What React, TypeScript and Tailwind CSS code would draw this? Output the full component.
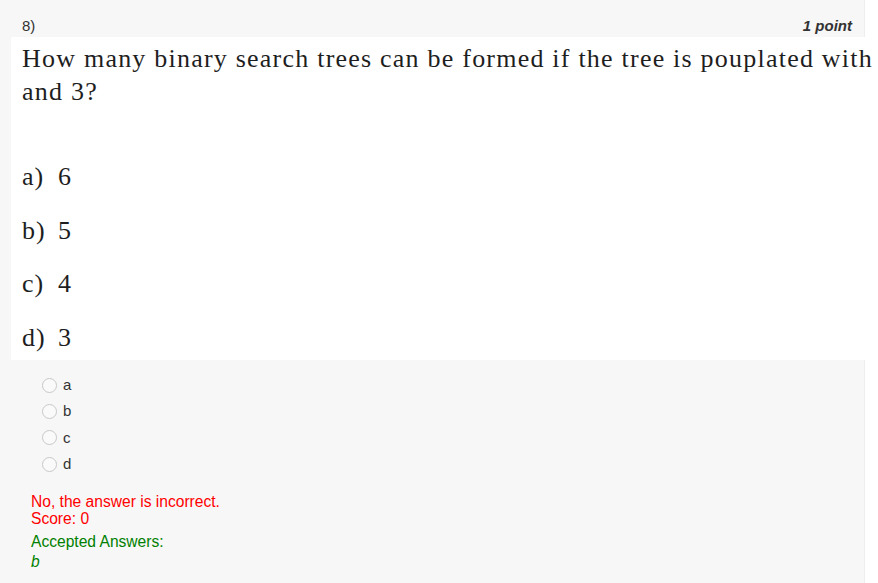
import React from "react";

const options = [
  ["a)", "6"],
  ["b)", "5"],
  ["c)", "4"],
  ["d)", "3"],
];

export default function App() {
  return (
    <div className="w-[878px] h-[583px] overflow-hidden bg-white" style={{ fontFamily: '"Liberation Sans", Arial, sans-serif' }}>
      <div className="w-[865px] h-[583px] bg-[#f7f7f7] border-r border-[#eeeeee]">
        <div className="h-[37px] flex items-center justify-between pl-[22px] pr-[12px] text-[15px] text-[#333333] pt-[16px]">
          <span>8)</span>
          <span className="font-bold italic">1 point</span>
        </div>
        <div className="ml-[11px] w-[900px] h-[323px] bg-white overflow-hidden pl-[11px] pt-[5px] text-[#1e1e1e]" style={{ fontFamily: '"Liberation Serif", "Times New Roman", serif' }}>
          <div className="text-[26px] leading-[33px] tracking-[1.22px] whitespace-nowrap">
            <div>How many binary search trees can be formed if the tree is pouplated with</div>
            <div>and 3?</div>
          </div>
          <div className="mt-[42px] text-[26px]">
            {options.map(([l, v]) => (
              <div key={l} className="flex leading-[53.7px]">
                <span className="w-[36px] tracking-[1px]">{l}</span>
                <span>{v}</span>
              </div>
            ))}
          </div>
        </div>
        <div className="pt-[12px] pl-[42px] text-[15px] text-[#333333]">
          {["a", "b", "c", "d"].map((o) => (
            <div key={o} className="flex items-center h-[26.4px] gap-[6px]">
              <span className="w-[15px] h-[15px] rounded-full border border-[#c8c8c8] bg-[#fafafa]" />
              <span>{o}</span>
            </div>
          ))}
        </div>
        <div className="pl-[31px] pt-[15px] text-[15.6px]">
          <div className="text-[#ff0000] leading-[17px]">No, the answer is incorrect.</div>
          <div className="text-[#ff0000] leading-[17px]">Score: 0</div>
          <div className="text-[#008000] leading-[20px] mt-[5px]">Accepted Answers:</div>
          <div className="text-[#008000] leading-[20px] italic">b</div>
        </div>
      </div>
    </div>
  );
}
